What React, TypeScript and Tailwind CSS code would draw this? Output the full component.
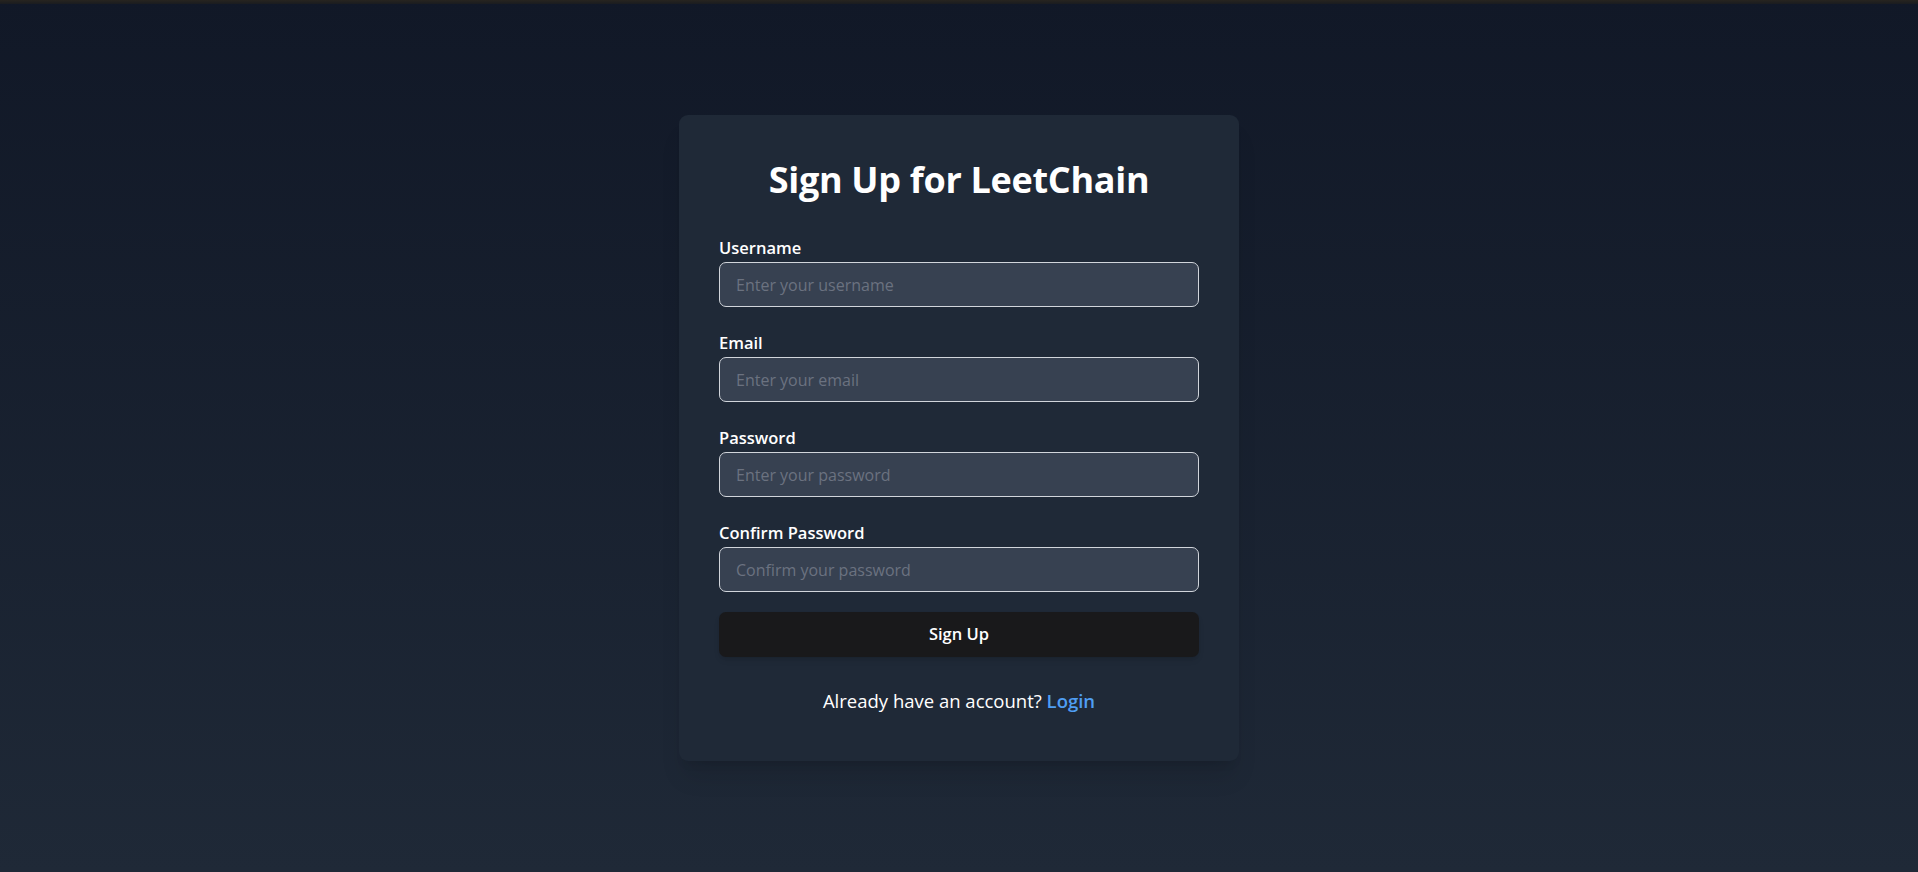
import React from "react";

const font = { fontFamily: '"Open Sans", "Noto Sans", sans-serif' };

function Field({ label, placeholder, type }: { label: string; placeholder: string; type: string }) {
  return (
    <div className="mb-[24px] flex flex-col">
      <label className="mb-[2px] text-[16.5px] leading-[24px] font-semibold text-white">{label}</label>
      <input
        type={type}
        placeholder={placeholder}
        className="h-[45px] w-full rounded-[7px] border border-[#d1d5db] bg-[#374151] px-[16px] text-[16px] text-white outline-none placeholder:text-[#6b7280]"
      />
    </div>
  );
}

export default function App() {
  return (
    <div className="flex h-screen flex-col bg-gradient-to-b from-[#111827] to-[#1f2937]" style={font}>
      <div className="h-[4px] w-full bg-gradient-to-b from-[#27241f] to-[#1a1c20]" />
      <div className="flex flex-1 items-center justify-center">
        <div className="w-[560px] rounded-[9px] bg-[#1f2937] px-[40px] pt-[43px] pb-[47px] shadow-xl">
          <h1 className="mb-[34px] text-center text-[36px] leading-[44px] font-bold tracking-[-0.3px] text-white">
            Sign Up for LeetChain
          </h1>
          <form onSubmit={(e) => e.preventDefault()}>
            <Field label="Username" placeholder="Enter your username" type="text" />
            <Field label="Email" placeholder="Enter your email" type="email" />
            <Field label="Password" placeholder="Enter your password" type="password" />
            <Field label="Confirm Password" placeholder="Confirm your password" type="password" />
            <button
              type="submit"
              className="-mt-[4px] h-[45px] w-full rounded-[7px] bg-[#19191b] text-[16.5px] font-semibold text-white shadow-md"
            >
              Sign Up
            </button>
          </form>
          <p className="mt-[31px] text-center text-[18.5px] leading-[26px] text-white">
            Already have an account? <a href="#" className="font-semibold text-[#4f9ef3]">Login</a>
          </p>
        </div>
      </div>
    </div>
  );
}
